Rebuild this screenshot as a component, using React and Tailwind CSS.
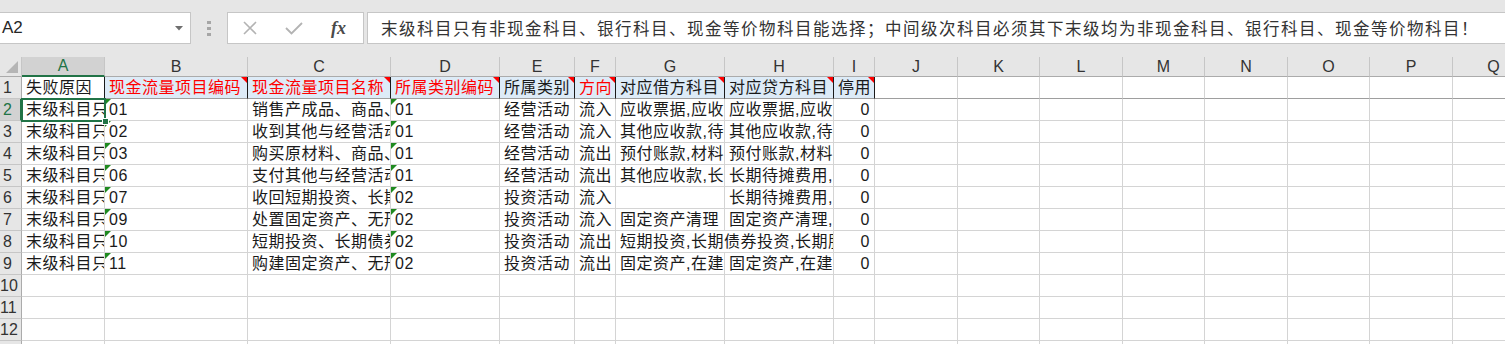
import React from 'react';

const COLS = ['A', 'B', 'C', 'D', 'E', 'F', 'G', 'H', 'I', 'J', 'K', 'L', 'M', 'N', 'O', 'P', 'Q'];

const HEAD = ['失败原因', '现金流量项目编码', '现金流量项目名称', '所属类别编码', '所属类别', '方向', '对应借方科目', '对应贷方科目', '停用'];
const RED_HEAD = [1, 2, 3, 5];

const MSG = '末级科目只有非现金科目、银行科目、现金等价物科目能选择；中间级次科目必须其下末级均为非现金科目、银行科目、现金等价物科目！';

// rows 2..9, columns A..I
const ROWS = [
  [MSG, '01', '销售产成品、商品、提供劳务收到的现金', '01', '经营活动', '流入', '应收票据,应收账款', '应收票据,应收账款', '0'],
  [MSG, '02', '收到其他与经营活动有关的现金', '01', '经营活动', '流入', '其他应收款,待摊费用', '其他应收款,待处理财产损溢', '0'],
  [MSG, '03', '购买原材料、商品、接受劳务支付的现金', '01', '经营活动', '流出', '预付账款,材料采购', '预付账款,材料采购', '0'],
  [MSG, '06', '支付其他与经营活动有关的现金', '01', '经营活动', '流出', '其他应收款,长期待摊费用', '长期待摊费用,其他应收款', '0'],
  [MSG, '07', '收回短期投资、长期债券投资和长期股权投资收到的现金', '02', '投资活动', '流入', '', '长期待摊费用,短期投资', '0'],
  [MSG, '09', '处置固定资产、无形资产和其他非流动资产收回的现金净额', '02', '投资活动', '流入', '固定资产清理', '固定资产清理,无形资产', '0'],
  [MSG, '10', '短期投资、长期债券投资和长期股权投资支付的现金', '02', '投资活动', '流出', '短期投资,长期债券投资,长期股权投资', null, '0'],
  [MSG, '11', '购建固定资产、无形资产和其他非流动资产支付的现金', '02', '投资活动', '流出', '固定资产,在建工程', '固定资产,在建工程', '0'],
];

function XIcon() {
  return (
    <svg width="14" height="14" viewBox="0 0 14 14">
      <path d="M1 1 L13 13 M13 1 L1 13" stroke="#b3b3b3" strokeWidth="1.6" fill="none" />
    </svg>
  );
}

function CheckIcon() {
  return (
    <svg width="18" height="14" viewBox="0 0 18 14">
      <path d="M1 7 L6.5 12.5 L17 2" stroke="#b3b3b3" strokeWidth="1.8" fill="none" />
    </svg>
  );
}

function FormulaBar() {
  return (
    <div className="h-[57px] flex items-start pt-[12px] font-['Liberation_Sans','Noto_Sans_CJK_SC',sans-serif]">
      {/* name box */}
      <div className="ml-[-1px] w-[192px] h-[32px] bg-white border border-[#c6c6c6] flex items-center justify-between pl-[2px] pr-[7px]">
        <span className="text-[17px] text-[#262626]">A2</span>
        <svg width="8" height="5" viewBox="0 0 8 5">
          <path d="M0 0 L8 0 L4 4.5 Z" fill="#6f6f6f" />
        </svg>
      </div>
      <div className="w-[36px] h-[32px] flex flex-col items-center justify-center gap-[3px]">
        <span className="w-[4px] h-[3px] bg-[#a6a6a6]" />
        <span className="w-[4px] h-[3px] bg-[#a6a6a6]" />
        <span className="w-[4px] h-[3px] bg-[#a6a6a6]" />
      </div>
      {/* cancel / enter / fx */}
      <div className="w-[137px] h-[32px] bg-white border border-[#c6c6c6] flex items-center pl-[15px] gap-[28px]">
        <XIcon />
        <CheckIcon />
        <span className="font-['Liberation_Serif',serif] italic font-bold text-[18px] text-[#4a4a4a] leading-none">fx</span>
      </div>
      <div className="ml-[3px] flex-1 h-[32px] bg-white border border-r-0 border-[#c6c6c6] pl-[13px] flex items-center overflow-hidden whitespace-nowrap">
        <span className="font-['Noto_Sans_CJK_SC',sans-serif] text-[16.5px] tracking-[1.5px] text-[#333]">{MSG}</span>
      </div>
    </div>
  );
}

function RedMark() {
  return <span className="absolute top-0 right-0 w-0 h-0 border-t-[6px] border-t-[#ff0000] border-l-[6px] border-l-transparent" />;
}

function GreenMark() {
  return <span className="absolute top-0 left-0 w-0 h-0 border-t-[6px] border-t-[#1f8a1f] border-r-[6px] border-r-transparent" />;
}

function Cell({ row, col, text, span }) {
  const head = row === 1;
  const tinted = head && col >= 1 && col <= 8;
  const edge = head && col <= 8;
  const red = head && RED_HEAD.includes(col);
  const right = !head && col === 8;
  const green = !head && row <= 9 && (col === 1 || col === 3);

  return (
    <div
      className={[
        'relative overflow-hidden whitespace-nowrap border-b border-r text-[16px] tracking-[0.5px] leading-[21px]',
        span ? 'col-span-2' : '',
        edge ? 'border-r-[#1a1a1a]' : 'border-r-[#d4d4d4]',
        head ? 'border-b-[#9e9e9e]' : 'border-b-[#d4d4d4]',
        tinted ? 'bg-[#ddebf7]' : 'bg-white',
        red ? 'text-[#ff0000]' : 'text-[#1a1a1a]',
        right ? 'text-right pr-[4px]' : 'pl-[4px]',
      ].join(' ')}
    >
      {text}
      {tinted && <RedMark />}
      {green && <GreenMark />}
    </div>
  );
}

function Sheet() {
  const cells = [];

  // corner
  cells.push(
    <div key="corner" className="relative bg-[#e6e6e6] border-r border-b border-r-[#c6c6c6] border-b-[#ababab]">
      <svg className="absolute right-[3px] bottom-[3px]" width="12" height="12" viewBox="0 0 12 12">
        <path d="M12 0 L12 12 L0 12 Z" fill="#b5b5b5" />
      </svg>
    </div>
  );

  COLS.forEach((c, i) => {
    const sel = i === 0;
    cells.push(
      <div
        key={'h' + c}
        className={
          sel
            ? 'flex items-center justify-center bg-[#d2d2d2] text-[#217346] border-r border-r-[#c6c6c6] border-b-2 border-b-[#217346] text-[16px]'
            : 'flex items-center justify-center bg-[#e6e6e6] text-[#333] border-r border-r-[#c6c6c6] border-b border-b-[#ababab] text-[16px]'
        }
      >
        {c}
      </div>
    );
  });

  for (let r = 1; r <= 13; r++) {
    const sel = r === 2;
    cells.push(
      <div
        key={'r' + r}
        className={
          sel
            ? 'relative bg-[#d2d2d2] text-[#217346] border-b border-b-[#c6c6c6] border-r-2 border-r-[#217346] text-[16px] leading-[21px]'
            : 'relative bg-[#e6e6e6] text-[#333] border-b border-b-[#c6c6c6] border-r border-r-[#ababab] text-[16px] leading-[21px]'
        }
      >
        <span className="block w-[15px] text-center overflow-visible whitespace-nowrap">{r}</span>
      </div>
    );

    const data = r === 1 ? HEAD : ROWS[r - 2] || [];
    for (let c = 0; c < COLS.length; c++) {
      const text = data[c];
      if (text === null) continue; // covered by overflow of previous cell
      const span = c === 6 && data[7] === null;
      cells.push(<Cell key={r + '-' + c} row={r} col={c} text={text} span={span} />);
    }
  }

  return (
    <div className="relative grid grid-cols-[22px_83px_143px_143px_109px_75px_41px_109px_109px_41px_83px_82px_83px_82px_83px_82px_83px_82px] grid-rows-[20px_repeat(13,22px)] font-['Liberation_Sans','Noto_Sans_CJK_SC',sans-serif]">
      {cells}
      {/* active cell A2 */}
      <div className="absolute left-[21px] top-[41px] w-[85px] h-[24px] border-2 border-[#217346] pointer-events-none" />
      <div className="absolute left-[102px] top-[61px] w-[7px] h-[7px] bg-[#217346] border border-white pointer-events-none" />
    </div>
  );
}

export default function App() {
  return (
    <div className="w-[1505px] h-[344px] overflow-hidden bg-[#e6e6e6]">
      <FormulaBar />
      <Sheet />
    </div>
  );
}
